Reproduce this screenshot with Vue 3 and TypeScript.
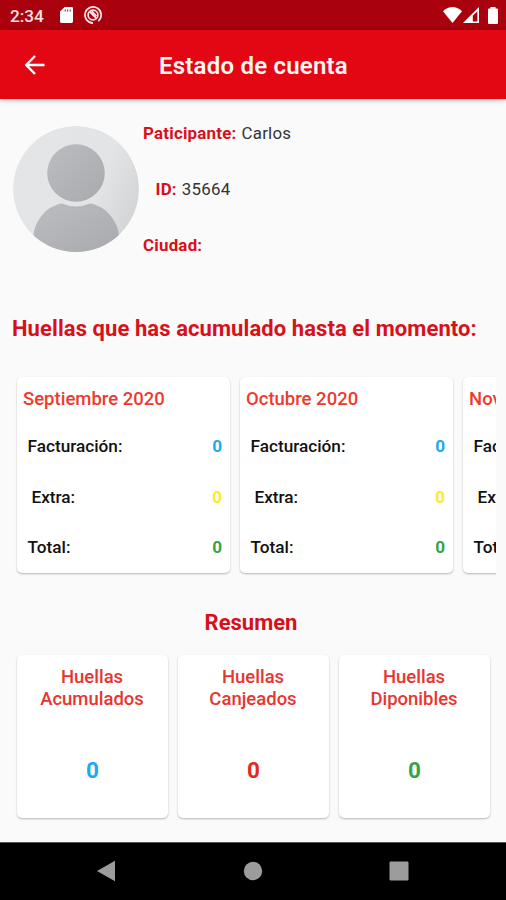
<script setup lang="ts">
interface Row {
  label: string
  value: number
  tone: string
  inset?: boolean
}
interface Month {
  name: string
  rows: Row[]
}

const rows: Row[] = [
  { label: 'Facturación:', value: 0, tone: 'blue' },
  { label: 'Extra:', value: 0, tone: 'yellow', inset: true },
  { label: 'Total:', value: 0, tone: 'green' },
]
const months: Month[] = ['Septiembre 2020', 'Octubre 2020', 'Noviembre 2020'].map((name) => ({ name, rows }))

const summary = [
  { label: 'Acumulados', value: 0, tone: 'blue' },
  { label: 'Canjeados', value: 0, tone: 'red' },
  { label: 'Diponibles', value: 0, tone: 'green' },
]
</script>

<template>
  <div class="screen">
    <div class="status">
      <span class="clock">2:34</span>
      <svg class="sd" viewBox="0 0 13 16"><path fill-rule="evenodd" d="M4.6 0H11.6Q13 0 13 1.4V14.6Q13 16 11.6 16H1.4Q0 16 0 14.6V4.6ZM4.7 2.4V4.4H5.7V2.4ZM7.2 2.4V4.4H8.2V2.4ZM9.7 2.4V4.4H10.7V2.4Z" /></svg>
      <svg class="ring" viewBox="0 0 18 18">
        <path d="M14.3 15.2A8.1 8.1 0 1 0 9 17.1" />
        <circle cx="9" cy="9" r="4.9" />
        <path d="M5.6 5.6L12.4 12.4M7.7 5.2L12.5 10" />
      </svg>
      <svg class="wifi" viewBox="0 0 19 16"><path d="M0 4.2Q9.5-4.2 19 4.2L9.5 16Z" /></svg>
      <svg class="signal" viewBox="0 0 16 16"><path fill-rule="evenodd" d="M16 0V16H0ZM14.400 4.600L9.800 8.600V14.400H14.400Z" /></svg>
      <svg class="battery" viewBox="0 0 10 17"><path d="M2.500 0H7.500V1.500H9Q10 1.500 10 2.500V16Q10 17 9 17H1Q0 17 0 16V2.500Q0 1.500 1 1.500H2.500Z" /></svg>
    </div>

    <header class="appbar">
      <svg class="back" viewBox="0 0 20 20"><path d="M19.5 10H1.8M10 1L1.2 10L10 19" /></svg>
      <h1>Estado de cuenta</h1>
    </header>

    <main>
      <section class="profile">
        <svg class="avatar" viewBox="0 0 126 126">
          <defs>
            <linearGradient id="disc" x1="0" y1="0.3" x2="1" y2="0.7">
              <stop offset="0" stop-color="#e3e5e7" />
              <stop offset="0.65" stop-color="#e3e4e6" />
              <stop offset="1" stop-color="#d2d3d5" />
            </linearGradient>
            <linearGradient id="figure" x1="0" y1="0" x2="1" y2="1">
              <stop offset="0" stop-color="#bcbdc1" />
              <stop offset="1" stop-color="#a9aaae" />
            </linearGradient>
            <clipPath id="round"><circle cx="63" cy="63" r="63" /></clipPath>
          </defs>
          <g clip-path="url(#round)">
            <circle cx="63" cy="63" r="63" fill="url(#disc)" />
            <circle cx="63" cy="47" r="28.8" fill="url(#figure)" />
            <path d="M20.5 126V109C22 95 33 80 49 77.5Q63 83.5 77 77.5C93 80 104.500 95 106 109V126Z" fill="url(#figure)" />
          </g>
        </svg>
        <dl>
          <div><dt>Paticipante:</dt><dd>Carlos</dd></div>
          <div class="indent"><dt>ID:</dt><dd>35664</dd></div>
          <div><dt>Ciudad:</dt><dd></dd></div>
        </dl>
      </section>

      <h2 class="lead">Huellas que has acumulado hasta el momento:</h2>

      <section class="months">
        <article v-for="m in months" :key="m.name" class="card month">
          <h3>{{ m.name }}</h3>
          <div v-for="r in m.rows" :key="r.label" class="row" :class="{ inset: r.inset }">
            <span>{{ r.label }}</span>
            <b :class="r.tone">{{ r.value }}</b>
          </div>
        </article>
      </section>

      <h2 class="resume">Resumen</h2>

      <section class="summary">
        <article v-for="s in summary" :key="s.label" class="card total">
          <h3>Huellas<br />{{ s.label }}</h3>
          <strong :class="s.tone">{{ s.value }}</strong>
        </article>
      </section>
    </main>

    <nav class="navbar">
      <svg viewBox="0 0 22 22"><path d="M20 .8V21.200L2 11Z" /></svg>
      <svg viewBox="0 0 22 22"><circle cx="11" cy="11" r="9.2" /></svg>
      <svg viewBox="0 0 22 22"><rect x="1.500" y="1.500" width="19" height="19" rx="1.200" /></svg>
    </nav>
  </div>
</template>

<style>
body {
  margin: 0;
  background: #fafafa;
}
</style>

<style scoped>
.screen {
  box-sizing: border-box;
  width: 506px;
  height: 900px;
  display: flex;
  flex-direction: column;
  overflow: hidden;
  background: #fafafa;
  font-family: Roboto, "Liberation Sans", sans-serif;
  color: #111;
}
h1, h2, h3, dl, dd {
  margin: 0;
}
.status {
  height: 30px;
  flex: none;
  display: flex;
  align-items: center;
  background: #a9020e;
  color: #fbe3e3;
  padding: 0 8px 0 10px;
}
.status svg {
  fill: #fff;
  flex: none;
}
.clock {
  width: 49.500px;
  font-size: 17.200px;
  font-weight: 500;
  line-height: 30px;
  padding-top: 2px;
  box-sizing: border-box;
}
.sd {
  width: 13px;
  height: 16px;
}
.status .ring {
  width: 18px;
  height: 18px;
  margin-left: 11.500px;
  fill: none;
  stroke: #fde8e8;
  stroke-width: 1.7;
}
.wifi {
  width: 19px;
  height: 16px;
  margin-left: auto;
}
.signal {
  width: 16px;
  height: 16px;
  margin-left: 1px;
}
.battery {
  width: 10px;
  height: 17px;
  margin-left: 9px;
}
.appbar {
  position: relative;
  height: 69px;
  flex: none;
  display: grid;
  grid-template-columns: 70px 1fr 70px;
  align-items: center;
  background: #e30613;
  box-shadow: 0 1px 5px rgba(0, 0, 0, 0.3);
}
.back {
  width: 20px;
  height: 20px;
  margin-left: 25px;
  fill: none;
  stroke: #fff;
  stroke-width: 2.5;
}
.appbar h1 {
  font-size: 24px;
  font-weight: 600;
  letter-spacing: 0.22px;
  line-height: 32px;
  color: #fff4f4;
  text-align: center;
  white-space: nowrap;
  padding: 2px 0 0 1px;
}
main {
  flex: 1;
  padding: 6px 10px 0 12px;
}
.profile {
  display: flex;
  height: 168px;
  gap: 4px;
}
.avatar {
  width: 126px;
  height: 126px;
  margin: 21px 0 0 1px;
}
.profile dl > div {
  height: 56px;
  display: flex;
  align-items: center;
  gap: 5px;
  font-size: 16.900px;
  letter-spacing: 0.22px;
}
.profile dl > .indent {
  padding-left: 12.500px;
}
.profile dt {
  font-weight: 700;
  color: #d8101a;
}
.profile dd {
  color: #333;
}
.lead {
  margin-top: 41px;
  font-size: 22px;
  letter-spacing: 0.08px;
  line-height: 30px;
  font-weight: 700;
  color: #d8101a;
  white-space: nowrap;
}
.months {
  margin-top: 28px;
  display: flex;
  gap: 10px;
  height: 206px;
  padding: 5px 0 0 5px;
  box-sizing: border-box;
  overflow: hidden;
}
.card {
  background: #fff;
  border-radius: 5px;
  box-shadow: 0 1px 2px rgba(0, 0, 0, 0.28);
}
.month {
  flex: none;
  width: 213px;
  height: 196px;
  box-sizing: border-box;
  padding: 10px 8px 0 6px;
}
.month h3 {
  font-size: 18.500px;
  line-height: 24px;
  font-weight: 500;
  color: #ee3a2e;
}
.row {
  display: flex;
  justify-content: space-between;
  align-items: center;
  height: 50.500px;
  padding-left: 4.500px;
  font-size: 17.200px;
  font-weight: 500;
}
.row:first-of-type {
  margin-top: 10px;
}
.row.inset {
  padding-left: 8.500px;
}
.row b {
  font-weight: 700;
}
.blue { color: #1da9ee; }
.yellow { color: #ffe92d; }
.green { color: #37a446; }
.red { color: #e5281e; }
.resume {
  margin-top: 30px;
  font-size: 22px;
  line-height: 30px;
  font-weight: 700;
  text-align: center;
  color: #d8101a;
  padding-right: 6px;
}
.summary {
  margin: 17px 5px 0;
  display: grid;
  grid-template-columns: repeat(3, 151px);
  gap: 10px;
}
.total {
  height: 163px;
  box-sizing: border-box;
  padding-top: 11px;
  text-align: center;
}
.total h3 {
  font-size: 18.500px;
  line-height: 22px;
  font-weight: 500;
  color: #e8362f;
  padding-right: 1px;
}
.total strong {
  display: block;
  margin-top: 45px;
  font-size: 22.500px;
  line-height: 30px;
  font-weight: 700;
}
.navbar {
  height: 58px;
  flex: none;
  box-sizing: border-box;
  background: #000;
  border-top: 1px solid #555;
  display: flex;
  justify-content: space-between;
  align-items: center;
  padding: 0 96px 2px 95px;
}
.navbar svg {
  width: 22px;
  height: 22px;
  fill: #9c9c9c;
}
</style>
